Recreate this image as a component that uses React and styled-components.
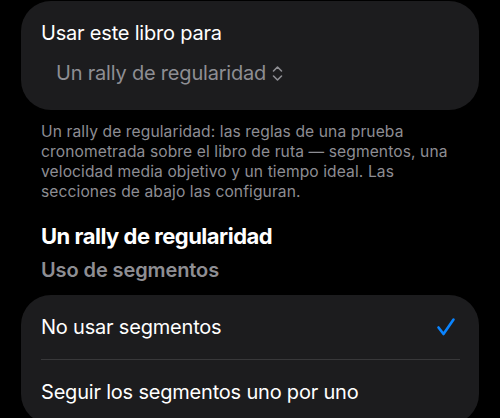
import styled, { createGlobalStyle } from "styled-components";

const GlobalStyle = createGlobalStyle`
    html, body {
        margin: 0;
        padding: 0;
        background: #000;
    }
    body {
        font-family: Inter, "Noto Sans", sans-serif;
        color: #fff;
        -webkit-font-smoothing: antialiased;
    }
`;

const Page = styled.div`
    width: 500px;
    height: 418px;
    overflow: hidden;
    box-sizing: border-box;
    padding: 1px 21px 0;
    display: flex;
    flex-direction: column;
`;

const Card = styled.div`
    background: #1c1c1e;
    border-radius: 30px;
    display: flex;
    flex-direction: column;
    margin-top: ${(p) => p.$top || 0}px;
    flex-shrink: 0;
`;

const PickerCard = styled(Card)`
    height: 109px;
    box-sizing: border-box;
    padding: 20px 20px 0;
    gap: 16px;
`;

const Label = styled.div`
    font-size: 20px;
    line-height: 24px;
    letter-spacing: -0.2px;
`;

const PickerValue = styled.div`
    display: flex;
    align-items: center;
    gap: 6px;
    padding-left: 15px;
    font-size: 20px;
    line-height: 24px;
    letter-spacing: -0.2px;
    color: #8e8e93;
`;

const Footer = styled.p`
    margin: 12px 0 0;
    padding: 0 20px;
    font-size: 15.6px;
    line-height: 20px;
    letter-spacing: 0.1px;
    color: #8d8d93;
`;

const Heading = styled.h2`
    margin: 20px 0 0;
    padding: 0 20px;
    font-size: 22px;
    line-height: 28px;
    font-weight: 700;
    letter-spacing: -0.5px;
`;

const SubHeading = styled.h3`
    margin: 7px 0 0;
    padding: 0 20px;
    font-size: 20px;
    line-height: 26px;
    font-weight: 600;
    color: #8e8e93;
    letter-spacing: -0.1px;
`;

const Row = styled.div`
    height: 64px;
    margin: 0 19px 0 20px;
    display: flex;
    align-items: center;
    justify-content: space-between;
    font-size: 20px;
    letter-spacing: -0.2px;
    border-bottom: ${(p) => (p.$last ? "none" : "1px solid #38383a")};
`;

function UpDown() {
    return (
        <svg width="11" height="17" viewBox="0 0 11 17" fill="none" stroke="#8e8e93" strokeWidth="1.6" strokeLinecap="round" strokeLinejoin="round">
            <path d="M1.5 6 L5.5 2 L9.5 6" />
            <path d="M1.5 11 L5.5 15 L9.5 11" />
        </svg>
    );
}

function Check() {
    return (
        <svg width="20" height="20" viewBox="0 0 20 20" fill="none" stroke="#0a84ff" strokeWidth="2.6" strokeLinecap="round" strokeLinejoin="round" style={{ marginRight: 4 }}>
            <path d="M2.5 10.5 L7.5 17 L17.5 2.5" />
        </svg>
    );
}

const options = ["No usar segmentos", "Seguir los segmentos uno por uno"];

export default function App() {
    return (
        <>
            <GlobalStyle />
            <Page>
                <PickerCard>
                    <Label>Usar este libro para</Label>
                    <PickerValue>
                        Un rally de regularidad
                        <UpDown />
                    </PickerValue>
                </PickerCard>
                <Footer>
                    Un rally de regularidad: las reglas de una prueba cronometrada sobre el libro de ruta — segmentos, una
                    velocidad media objetivo y un tiempo ideal. Las secciones de abajo las configuran.
                </Footer>
                <Heading>Un rally de regularidad</Heading>
                <SubHeading>Uso de segmentos</SubHeading>
                <Card $top={12}>
                    {options.map((opt, i) => (
                        <Row key={opt} $last={i === options.length - 1}>
                            {opt}
                            {i === 0 && <Check />}
                        </Row>
                    ))}
                </Card>
            </Page>
        </>
    );
}
